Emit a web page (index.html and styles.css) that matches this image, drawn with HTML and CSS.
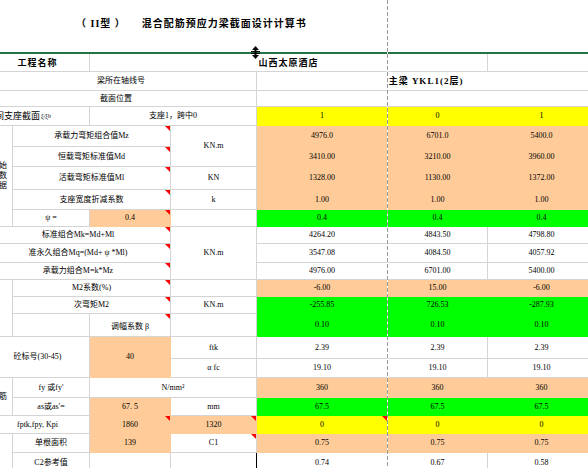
FILE: index.html
```html
<!DOCTYPE html>
<html lang="zh">
<head>
<meta charset="utf-8">
<link rel="stylesheet" href="styles.css">
</head>
<body>
<div class="title"><span class="type">（ II型 ）</span><span>混合配筋预应力梁截面设计计算书</span></div>
<div class="rule"></div>
<div class="sheet">
  <!-- row 1 -->
  <div class="c s2 b">工程名称</div>
  <div class="c s4 b">山西太原酒店</div>
  <div class="c"></div>
  <!-- row 2 -->
  <div class="c s4">梁所在轴线号</div>
  <div class="c s3 b">主梁 YKL1(2层)</div>
  <!-- row 3 -->
  <div class="c s4 shift">截面位置</div>
  <div class="c s3"></div>
  <!-- row 4 -->
  <div class="c s2 endtext">中间支座截面<small>ξ/ξb</small></div>
  <div class="c s2">支座1，跨中0</div>
  <div class="c y">1</div><div class="c y">0</div><div class="c y">1</div>
  <!-- row 5 -->
  <div class="c r5 vert"><span>始<br>数<br>据</span></div>
  <div class="c s2 t">承载力弯矩组合值Mz</div>
  <div class="c r2">KN.m</div>
  <div class="c p">4976.0</div><div class="c p">6701.0</div><div class="c p">5400.0</div>
  <!-- row 6 -->
  <div class="c s2 t">恒载弯矩标准值Md</div>
  <div class="c p">3410.00</div><div class="c p">3210.00</div><div class="c p">3960.00</div>
  <!-- row 7 -->
  <div class="c s2 t">活载弯矩标准值Ml</div>
  <div class="c">KN</div>
  <div class="c p">1328.00</div><div class="c p">1130.00</div><div class="c p">1372.00</div>
  <!-- row 8 -->
  <div class="c s2 t">支座宽度折减系数</div>
  <div class="c">k</div>
  <div class="c p">1.00</div><div class="c p">1.00</div><div class="c p">1.00</div>
  <!-- row 9 -->
  <div class="c">ψ =</div>
  <div class="c p t">0.4</div>
  <div class="c"></div>
  <div class="c g">0.4</div><div class="c g">0.4</div><div class="c g">0.4</div>
  <!-- row 10 -->
  <div class="c s3 t">标准组合Mk=Md+Ml</div>
  <div class="c r3">KN.m</div>
  <div class="c">4264.20</div><div class="c">4843.50</div><div class="c">4798.80</div>
  <!-- row 11 -->
  <div class="c s3 t">准永久组合Mq=(Md+ ψ *Ml)</div>
  <div class="c">3547.08</div><div class="c">4084.50</div><div class="c">4057.92</div>
  <!-- row 12 -->
  <div class="c s3 t">承载力组合M=k*Mz</div>
  <div class="c">4976.00</div><div class="c">6701.00</div><div class="c">5400.00</div>
  <!-- row 13 -->
  <div class="c r3"></div>
  <div class="c s2 t">M2系数(%)</div>
  <div class="c"></div>
  <div class="c p">-6.00</div><div class="c p">15.00</div><div class="c p">-6.00</div>
  <!-- row 14 -->
  <div class="c s2 t">次弯矩M2</div>
  <div class="c">KN.m</div>
  <div class="c g">-255.85</div><div class="c g">726.53</div><div class="c g">-287.93</div>
  <!-- row 15 -->
  <div class="c"></div>
  <div class="c t low">调幅系数 β</div>
  <div class="c"></div>
  <div class="c g">0.10</div><div class="c g">0.10</div><div class="c g">0.10</div>
  <!-- row 16 -->
  <div class="c s2 r2">砼标号(30-45)</div>
  <div class="c r2 p">40</div>
  <div class="c">ftk</div>
  <div class="c">2.39</div><div class="c">2.39</div><div class="c">2.39</div>
  <!-- row 17 -->
  <div class="c">α fc</div>
  <div class="c">19.10</div><div class="c">19.10</div><div class="c">19.10</div>
  <!-- row 18 -->
  <div class="c r2">钢筋</div>
  <div class="c">fy 或fy'</div>
  <div class="c s2">N/mm²</div>
  <div class="c p">360</div><div class="c p">360</div><div class="c p">360</div>
  <!-- row 19 -->
  <div class="c">as或as'=</div>
  <div class="c p">67. 5</div>
  <div class="c">mm</div>
  <div class="c g">67.5</div><div class="c g">67.5</div><div class="c g">67.5</div>
  <!-- row 20 -->
  <div class="c s2">fptk,fpy, Kpi</div>
  <div class="c p t">1860</div>
  <div class="c p t">1320</div>
  <div class="c y t">0</div><div class="c y">0</div><div class="c y">0</div>
  <!-- row 21 -->
  <div class="c r2"></div>
  <div class="c">单根面积</div>
  <div class="c p">139</div>
  <div class="c t">C1</div>
  <div class="c p">0.75</div><div class="c p">0.75</div><div class="c p">0.75</div>
  <!-- row 22 -->
  <div class="c">C2参考值</div>
  <div class="c"></div>
  <div class="c edge"></div>
  <div class="c">0.74</div><div class="c">0.67</div><div class="c">0.58</div>
</div>
<div class="pagebreak"></div>
<svg class="cursor" width="9" height="13" viewBox="0 0 9 13">
  <polygon points="4.5,0 8,4 1,4" fill="#000"/>
  <rect x="3.5" y="3.5" width="2" height="6" fill="#000"/>
  <rect x="0" y="5" width="9" height="1" fill="#000"/>
  <rect x="0" y="7" width="9" height="1" fill="#000"/>
  <polygon points="1,9 8,9 4.5,13" fill="#000"/>
</svg>
</body>
</html>
```
FILE: styles.css
```css
html, body {
  margin: 0;
  padding: 0;
  overflow: hidden;
  background: #fff;
}

body {
  position: relative;
  width: 588px;
  height: 468px;
  font-family: "Liberation Serif", "Noto Sans CJK SC", serif;
  font-size: 8px;
  color: #000;
}

.title {
  height: 52px;
  box-sizing: border-box;
  padding: 16px 0 0 76px;
  line-height: 14px;
  font-family: "Noto Sans CJK SC", sans-serif;
  font-weight: bold;
  font-size: 10px;
  letter-spacing: 1px;
  white-space: nowrap;
}

.title .type {
  font-family: "Liberation Serif", "Noto Sans CJK SC", serif;
  margin-right: 16px;
}

.rule {
  height: 2px;
  background: #217346;
}

.sheet {
  display: grid;
  margin-left: -14px;
  grid-template-columns: 27px 77px 81px 86px 131px 100px 108px;
  grid-template-rows: 18px 19px 16px 19px 21px 20px 23px 20px 17px 17px 19px 17px 17px 17px 23px 22px 19px 20px 18px 18px 19px 20px;
}

.c {
  box-sizing: border-box;
  position: relative;
  min-width: 0;
  display: flex;
  align-items: center;
  justify-content: center;
  white-space: nowrap;
  line-height: 10px;
  border-right: 1px solid #d4d4d4;
  border-bottom: 1px solid #d4d4d4;
}

.s2 { grid-column: span 2; }
.s3 { grid-column: span 3; }
.s4 { grid-column: span 4; }
.r2 { grid-row: span 2; }
.r3 { grid-row: span 3; }
.r5 { grid-row: span 5; }

.b {
  font-weight: bold;
  font-size: 9px;
  letter-spacing: 1px;
}

.shift { padding-right: 10px; }

.endtext {
  justify-content: flex-end;
  padding-right: 38px;
  font-size: 9px;
}

.endtext small {
  font-size: 6px;
  margin-left: 1px;
}

.vert {
  justify-content: flex-end;
  padding-right: 5px;
}

.vert span {
  display: block;
  line-height: 10px;
}

.low { padding-top: 3px; }

.p { background: #ffcc99; border-color: #ffcc99; }
.g { background: #00ff00; border-color: #00ff00; }
.y { background: #ffff00; border-color: #ffff00; }

.t::after {
  content: "";
  position: absolute;
  top: 0;
  right: 0;
  width: 0;
  height: 0;
  border-top: 5px solid #ff0000;
  border-left: 5px solid transparent;
}

.edge { border-right-color: #000; }

.pagebreak {
  position: absolute;
  left: 387px;
  top: 0;
  width: 1px;
  height: 468px;
  background: repeating-linear-gradient(to bottom, #9a9a9a 0 4px, #ffffff 4px 6px);
}

.cursor {
  position: absolute;
  left: 251px;
  top: 46px;
}
```
